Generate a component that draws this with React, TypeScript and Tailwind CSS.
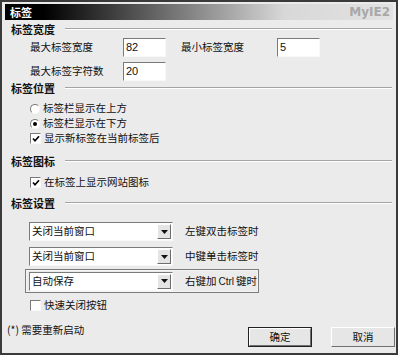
import React from "react";

const sunken =
  "border border-t-[#7a7a7a] border-l-[#7a7a7a] border-b-[#f8f8f8] border-r-[#f8f8f8] bg-white";

function Heading({ label, className = "" }: { label: string; className?: string }) {
  return (
    <div className={`flex h-[14px] items-center pl-[9px] pr-[4px] ${className}`}>
      <span className="text-[11px] font-bold leading-none text-[#111]">{label}</span>
      <div className="ml-[10px] flex-1 border-t border-b border-t-[#a4a4a4] border-b-white" />
    </div>
  );
}

function TextBox({ value, className = "" }: { value: string; className?: string }) {
  return (
    <div
      className={`flex h-[19px] w-[43px] items-center pl-[2px] font-['Liberation_Sans',sans-serif] text-[11px] ${sunken} ${className}`}
    >
      {value}
    </div>
  );
}

function Radio({ checked, label }: { checked?: boolean; label: string }) {
  return (
    <div className="flex h-[15px] items-center pl-[28px]">
      <span
        className={`flex h-[10px] w-[10px] items-center justify-center rounded-full ${sunken}`}
      >
        {checked && <span className="h-[4px] w-[4px] rounded-full bg-black" />}
      </span>
      <span className="ml-[3px]">{label}</span>
    </div>
  );
}

function Check({ checked, label }: { checked?: boolean; label: string }) {
  return (
    <div className="flex h-[15px] items-center pl-[28px]">
      <span className={`flex h-[11px] w-[11px] items-center justify-center ${sunken}`}>
        {checked && (
          <svg width="8" height="8" viewBox="0 0 8 8">
            <path d="M1 3.5 L3 5.8 L7 1.2" fill="none" stroke="#000" strokeWidth="1.6" />
          </svg>
        )}
      </span>
      <span className="ml-[3px]">{label}</span>
    </div>
  );
}

function Select({ value }: { value: string }) {
  return (
    <div className={`flex h-[19px] w-[144px] shrink-0 items-center ${sunken}`}>
      <span className="flex-1 pl-[2px]">{value}</span>
      <span className="mr-[1px] flex h-[15px] w-[14px] items-center justify-center border border-t-white border-l-white border-b-[#6e6e6e] border-r-[#6e6e6e] bg-[#e4e4e4]">
        <svg width="7" height="4" viewBox="0 0 7 4">
          <path d="M0 0 H7 L3.5 4 Z" fill="#111" />
        </svg>
      </span>
    </div>
  );
}

function Button({ label, primary }: { label: string; primary?: boolean }) {
  return (
    <div className={`h-[20px] w-[64px] ${primary ? "border border-[#222]" : ""}`}>
      <div className="flex h-full w-full items-center justify-center border border-t-white border-l-white border-b-[#707070] border-r-[#707070] bg-[#e6e6e6]">
        {label}
      </div>
    </div>
  );
}

export default function App() {
  return (
    <div className="h-[356px] w-[400px] bg-white">
      <div className="flex h-[355px] w-[398px] flex-col border-2 border-[#3a3a3a] bg-[#ebebeb] font-['Noto_Sans_CJK_SC',sans-serif] text-[10.5px] leading-none text-[#111]">
        <div className="mx-[3px] mt-[2px] flex h-[16px] items-center justify-between bg-[linear-gradient(to_right,#000_0%,#000_10%,#d8d8d8_72%,#e2e2e2_100%)] pl-[5px] pr-[3px]">
          <span className="text-[11px] font-bold text-white">标签</span>
          <span className="font-['DejaVu_Sans',sans-serif] text-[12px] font-bold text-[#a8a8a8]">MyIE2</span>
        </div>

        <Heading label="标签宽度" className="mt-[2px]" />
        <div className="mt-[2px] flex items-center pl-[28px]">
          <span className="w-[93px]">最大标签宽度</span>
          <TextBox value="82" />
          <span className="ml-[15px] w-[96px]">最小标签宽度</span>
          <TextBox value="5" />
        </div>
        <div className="mt-[5px] flex items-center pl-[28px]">
          <span className="w-[93px]">最大标签字符数</span>
          <TextBox value="20" />
        </div>

        <Heading label="标签位置" />
        <div className="mt-[6px]">
          <Radio label="标签栏显示在上方" />
          <Radio checked label="标签栏显示在下方" />
          <Check checked label="显示新标签在当前标签后" />
        </div>

        <Heading label="标签图标" className="mt-[8px]" />
        <div className="mt-[7px]">
          <Check checked label="在标签上显示网站图标" />
        </div>

        <Heading label="标签设置" className="mt-[6px]" />
        <div className="mt-[12px] flex items-center pl-[27px]">
          <Select value="关闭当前窗口" />
          <span className="ml-[12px]">左键双击标签时</span>
        </div>
        <div className="mt-[6px] flex items-center pl-[27px]">
          <Select value="关闭当前窗口" />
          <span className="ml-[12px]">中键单击标签时</span>
        </div>
        <div className="ml-[23px] mt-[3px] flex h-[24px] w-fit items-center whitespace-nowrap border border-[#7c7c7c] pl-[3px] pr-[1px] shadow-[inset_0_0_0_1px_#f4f4f4]">
          <Select value="自动保存" />
          <span className="ml-[12px] whitespace-nowrap">
            右键加<span className="mx-[2px] font-['Liberation_Sans',sans-serif] text-[10px]">Ctrl</span>键时
          </span>
        </div>
        <div className="mt-[5px]">
          <Check label="快速关闭按钮" />
        </div>

        <div className="mt-[11px] flex items-start">
          <span className="ml-[5px] mt-[1px]">(*) 需要重新启动</span>
          <div className="ml-auto mr-[1px] mt-[3px] flex gap-[19px]">
            <Button primary label="确定" />
            <Button label="取消" />
          </div>
        </div>
      </div>
    </div>
  );
}
